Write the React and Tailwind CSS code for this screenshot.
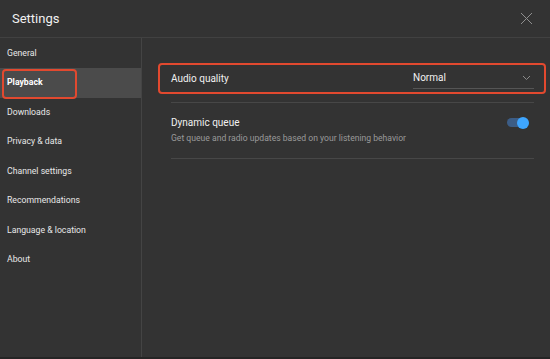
import { useState } from "react";

export default function App() {
  const [dynamicQueue, setDynamicQueue] = useState(true)

  const sections = [
    "General",
    "Playback",
    "Downloads",
    "Privacy & data",
    "Channel settings",
    "Recommendations",
    "Language & location",
    "About",
  ];

  return (
    <div className="w-[550px] h-[359px] bg-[#333333] text-[#f1f1f1] font-['Roboto',sans-serif] flex flex-col overflow-hidden">
      <div className="h-[38px] shrink-0 flex items-center justify-between pl-3 pr-[17px] border-b border-[#414141]">
        <h1 className="text-[13px] leading-none">Settings</h1>
        <button className="text-[#8f8f8f]">
          <svg width="13" height="13" viewBox="0 0 13 13" fill="none" stroke="currentColor" strokeWidth="1">
            <path d="M1 1 L12 12 M12 1 L1 12" />
          </svg>
        </button>
      </div>

      <div className="flex flex-1 min-h-0">
        <ul className="w-[142px] shrink-0 border-r border-[#444444] pt-[0.5px]">
          {sections.map((name) => {
            const active = name === "Playback"
            return (
              <li
                key={name}
                className={`relative h-[29.5px] flex items-center pl-[7px] text-[8.7px] ${active ? "bg-[#4b4b4b] font-bold text-white" : "text-[#e8e8e8]"}`}
              >
                {name}
                {active && (
                  <span className="absolute left-[2px] top-[1px] w-[75px] h-[30px] border-2 border-[#e2492f] rounded-[4px]" />
                )}
              </li>
            )
          })}
        </ul>

        <div className="flex-1 pl-[29px] pr-[16px] pt-[25px]">
          <div className="-ml-[13px] -mr-[12px] h-[31px] border-2 border-[#e2492f] rounded-[4px] pl-[11px] pr-[10px] flex items-center justify-between">
            <span className="text-[10px] text-[#f1f1f1]">Audio quality</span>
            <div className="w-[121px] h-[19px] border-b border-[#555555] flex items-center justify-between pb-[3px] mt-[2px]">
              <span className="text-[10px] text-[#f1f1f1]">Normal</span>
              <svg width="9" height="6" viewBox="0 0 9 6" fill="none" stroke="#8a8a8a" strokeWidth="1" className="mr-[3px]">
                <path d="M1 1 L4.5 4.5 L8 1" />
              </svg>
            </div>
          </div>

          <div className="mt-[8px] border-t border-[#474747] h-[56px] flex items-center justify-between">
            <div className="flex flex-col gap-[6px]">
              <span className="text-[10px] text-[#f1f1f1] leading-none">Dynamic queue</span>
              <span className="text-[8.6px] text-[#9a9a9a] leading-none">Get queue and radio updates based on your listening behavior</span>
            </div>
            <button
              onClick={() => setDynamicQueue(!dynamicQueue)}
              className="relative w-[22px] h-[14px] mr-[5px] mb-[16px] flex items-center"
            >
              <span className={`w-[20px] h-[9px] rounded-full ${dynamicQueue ? "bg-[#3c5d86]" : "bg-[#666666]"}`} />
              <span className={`absolute top-[1px] w-[12px] h-[12px] rounded-full ${dynamicQueue ? "left-[10px] bg-[#3ea6ff]" : "left-[-2px] bg-[#cccccc]"}`} />
            </button>
          </div>
          <div className="border-t border-[#474747]" />
        </div>
      </div>
      <div className="h-[2px] shrink-0 bg-[#252525]" />
    </div>
  )
}
